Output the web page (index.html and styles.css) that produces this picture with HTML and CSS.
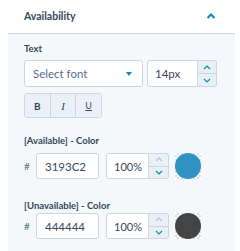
FILE: index.html
```html
<!DOCTYPE html>
<html lang="en">
<head>
  <meta charset="UTF-8" />
  <title>Availability</title>
  <link rel="stylesheet" href="styles.css">
</head>
<body>

  <div class="accordion">
    <div class="acc-header">
      <span class="acc-title">Availability</span>
      <svg class="chev" width="10" height="6" viewBox="0 0 10 6"><path d="M1.5 5L5 1.5 8.5 5" fill="none" stroke="#0091ae" stroke-width="2"/></svg>
    </div>

    <div class="acc-body">
      <label class="field-label">Text</label>
      <div class="row">
        <div class="select">
          <span>Select font</span>
          <span class="caret"></span>
        </div>
        <div class="num">
          <input class="num-input w-size" value="14px" />
          <div class="stepper">
            <button class="step"><svg width="8" height="5" viewBox="0 0 8 5"><path d="M1 4L4 1 7 4" fill="none" stroke="#0091ae" stroke-width="1.2"/></svg></button>
            <button class="step"><svg width="8" height="5" viewBox="0 0 8 5"><path d="M1 1L4 4 7 1" fill="none" stroke="#0091ae" stroke-width="1.2"/></svg></button>
          </div>
        </div>
      </div>

      <div class="styles">
        <button class="style-btn bold">B</button>
        <button class="style-btn italic">I</button>
        <button class="style-btn under">U</button>
      </div>

      <label class="field-label color-label">[Available] - Color</label>
      <div class="color-row">
        <span class="hash">#</span>
        <input class="hex" value="3193C2" />
        <div class="num">
          <input class="num-input w-pct" value="100%" />
          <div class="stepper">
            <button class="step"><svg width="8" height="5" viewBox="0 0 8 5"><path d="M1 4L4 1 7 4" fill="none" stroke="#b0c1d4" stroke-width="1.2"/></svg></button>
            <button class="step"><svg width="8" height="5" viewBox="0 0 8 5"><path d="M1 1L4 4 7 1" fill="none" stroke="#0091ae" stroke-width="1.2"/></svg></button>
          </div>
        </div>
        <div class="swatch"><span class="dot" style="background:#3193c2"></span></div>
      </div>

      <label class="field-label color-label second">[Unavailable] - Color</label>
      <div class="color-row">
        <span class="hash">#</span>
        <input class="hex" value="444444" />
        <div class="num">
          <input class="num-input w-pct" value="100%" />
          <div class="stepper">
            <button class="step"><svg width="8" height="5" viewBox="0 0 8 5"><path d="M1 4L4 1 7 4" fill="none" stroke="#b0c1d4" stroke-width="1.2"/></svg></button>
            <button class="step"><svg width="8" height="5" viewBox="0 0 8 5"><path d="M1 1L4 4 7 1" fill="none" stroke="#0091ae" stroke-width="1.2"/></svg></button>
          </div>
        </div>
        <div class="swatch"><span class="dot" style="background:#444444"></span></div>
      </div>
    </div>
  </div>

</body>
</html>
```

FILE: styles.css
```css
* {
  margin: 0;
  padding: 0;
  box-sizing: border-box;
}
body {
  font-family: 'Lato', 'Liberation Sans', sans-serif;
  background-color: #ffffff;
  color: #33475b;
}
.accordion {
  margin-left: 8px;
  width: 227px;
}
.acc-header {
  height: 34px;
  display: flex;
  align-items: center;
  justify-content: space-between;
  padding: 0 19px 1px 16px;
  border-bottom: 1px solid #cbd6e2;
  background: #fff;
}
.acc-title {
  font-size: 10.5px;
  font-weight: 700;
}
.acc-body {
  background-color: #f5f8fa;
  padding: 9px 16px 20px;
  min-height: 217px;
}
.field-label {
  display: block;
  font-size: 9.5px;
  font-weight: 700;
  line-height: 12px;
  margin-bottom: 5px;
}
.row {
  display: flex;
  gap: 4px;
  height: 27px;
}
.select {
  width: 119px;
  background: #fff;
  border: 1px solid #cbd6e2;
  border-radius: 3px;
  display: flex;
  align-items: center;
  justify-content: space-between;
  padding: 0 10px 0 8px;
  font-size: 11.5px;
  color: #516f90;
}
.caret {
  width: 0;
  height: 0;
  border-left: 3.5px solid transparent;
  border-right: 3.5px solid transparent;
  border-top: 4px solid #0091ae;
}
.num {
  display: flex;
}
.num-input {
  font-family: inherit;
  font-size: 11.5px;
  color: #33475b;
  background: #fff;
  border: 1px solid #cbd6e2;
  border-radius: 3px 0 0 3px;
  padding: 0 7px;
  outline: none;
}
.w-size {
  width: 51px;
}
.w-pct {
  width: 43px;
  font-size: 11px;
  padding: 0 4px 0 7px;
}
.stepper {
  width: 19px;
  display: flex;
  flex-direction: column;
  border: 1px solid #cbd6e2;
  border-left: none;
  border-radius: 0 3px 3px 0;
  background: #eaf0f6;
  overflow: hidden;
}
.step {
  flex: 1;
  border: none;
  background: transparent;
  display: flex;
  align-items: center;
  justify-content: center;
}
.step + .step {
  border-top: 1px solid #cbd6e2;
}
.styles {
  display: flex;
  margin-top: 6px;
  width: 78px;
  height: 25px;
  border: 1px solid #cbd6e2;
  border-radius: 3px;
  overflow: hidden;
}
.style-btn {
  flex: 1;
  border: none;
  background: #eaf0f6;
  color: #33475b;
  font-family: inherit;
  font-size: 10px;
}
.style-btn + .style-btn {
  border-left: 1px solid #cbd6e2;
}
.bold {
  font-weight: 700;
}
.italic {
  font-family: 'Liberation Serif', serif;
  font-style: italic;
  font-size: 11px;
}
.under {
  text-decoration: underline;
  font-size: 9px;
}
.color-label {
  margin-top: 17px;
  margin-bottom: 6px;
}
.color-label.second {
  margin-top: 21px;
  margin-bottom: 1px;
}
.color-row {
  display: flex;
  align-items: center;
  height: 26px;
}
.hash {
  width: 12px;
  font-size: 10px;
  color: #516f90;
}
.hex {
  width: 63px;
  height: 26px;
  font-family: inherit;
  font-size: 11.5px;
  color: #33475b;
  background: #fff;
  border: 1px solid #cbd6e2;
  border-radius: 3px;
  padding: 0 8px;
  margin-right: 7px;
  outline: none;
}
.color-row .num {
  height: 26px;
}
.color-row .stepper {
  width: 20px;
}
.swatch {
  width: 26px;
  height: 26px;
  margin-left: 6px;
  background-color: #fff;
  background-image: conic-gradient(#d5dde6 25%, #fff 0 50%, #d5dde6 0 75%, #fff 0);
  background-size: 4px 4px;
  display: flex;
}
.dot {
  flex: 1;
  border-radius: 50%;
}
```
